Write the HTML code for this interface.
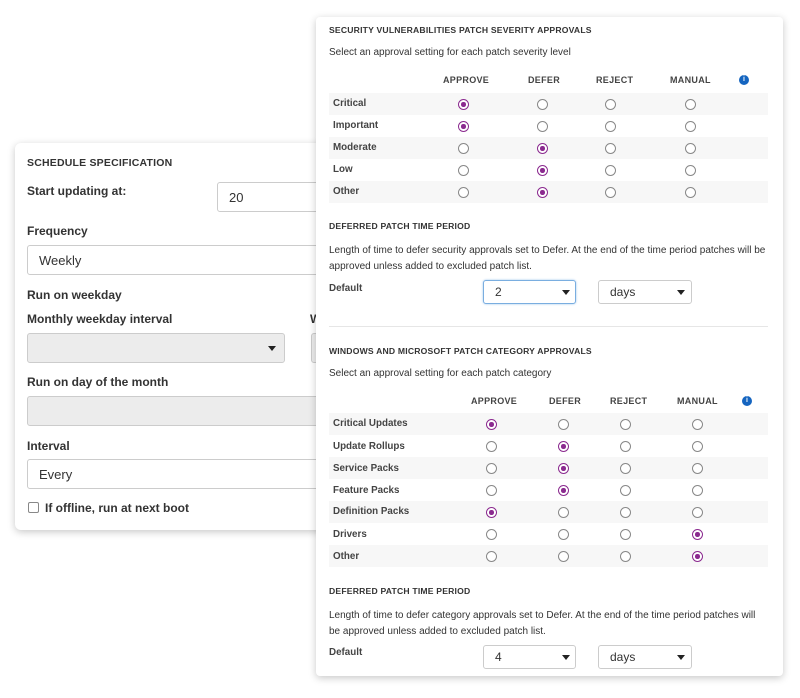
<!DOCTYPE html>
<html><head><meta charset="utf-8"><style>
*{box-sizing:border-box;margin:0;padding:0}
body{width:800px;height:698px;background:#fff;font-family:"Liberation Sans",sans-serif;color:#333;position:relative;overflow:hidden}
.a{position:absolute;white-space:nowrap}
.card{position:absolute;background:#fff;border-radius:6px;box-shadow:0 2px 8px rgba(0,0,0,.22)}
.lbl{font-size:12px;font-weight:bold;color:#333}
.h{font-size:8.6px;font-weight:bold;color:#333;letter-spacing:.2px}
.t{font-size:10px;color:#333}
.inp{position:absolute;border:1px solid #ccc;border-radius:3px;background:#fff;font-size:13px;color:#333;padding-left:11px;display:flex;align-items:center}
.dis{background:#ececec}
.car{position:absolute;width:0;height:0;border-left:4px solid transparent;border-right:4px solid transparent;border-top:5px solid #222}
.stripe{position:absolute;left:329px;width:439px;height:22px;background:#f7f7f7}
.r{position:absolute;width:11px;height:11px;border:1.3px solid #888;border-radius:50%;background:#fff}
.r.on{border-color:#8b2a8f}
.r.on::after{content:"";position:absolute;left:2px;top:2px;width:4.5px;height:4.5px;border-radius:50%;background:#8b2a8f}
.rl{font-size:9.8px;font-weight:bold;color:#444}
.ch{font-size:9px;font-weight:bold;color:#444;letter-spacing:.3px}
.info{position:absolute;width:10px;height:10px;border-radius:50%;background:#1565c0;color:#fff;font-size:7px;font-weight:bold;text-align:center;line-height:10px}
</style></head><body>

<div class="card" style="left:15px;top:143px;width:320px;height:387px"></div>
<div class="a h" style="left:27px;top:157px;font-size:10.5px">SCHEDULE SPECIFICATION</div>
<div class="a lbl" style="left:27px;top:184px">Start updating at:</div>
<div class="inp" style="left:217px;top:182px;width:110px;height:30px">20</div>
<div class="a lbl" style="left:27px;top:224px">Frequency</div>
<div class="inp" style="left:27px;top:245px;width:300px;height:30px">Weekly</div>
<div class="a lbl" style="left:27px;top:288px">Run on weekday</div>
<div class="a lbl" style="left:27px;top:312px">Monthly weekday interval</div>
<div class="a lbl" style="left:310px;top:312px">W</div>
<div class="inp dis" style="left:27px;top:333px;width:258px;height:30px"></div>
<div class="car" style="left:268px;top:346px"></div>
<div class="inp dis" style="left:311px;top:333px;width:20px;height:30px"></div>
<div class="a lbl" style="left:27px;top:375px">Run on day of the month</div>
<div class="inp dis" style="left:27px;top:396px;width:300px;height:30px"></div>
<div class="a lbl" style="left:27px;top:439px">Interval</div>
<div class="inp" style="left:27px;top:459px;width:300px;height:30px">Every</div>
<div class="a" style="left:28px;top:502px;width:11px;height:11px;border:1.3px solid #888;border-radius:2px"></div>
<div class="a lbl" style="left:45px;top:501px">If offline, run at next boot</div>

<div class="card" style="left:316px;top:17px;width:467px;height:659px;border-radius:4px"></div>
<div class="a h" style="left:329px;top:25px">SECURITY VULNERABILITIES PATCH SEVERITY APPROVALS</div>
<div class="a t" style="left:329px;top:47px">Select an approval setting for each patch severity level</div>
<div class="a ch" style="left:443px;top:75px">APPROVE</div>
<div class="a ch" style="left:528px;top:75px">DEFER</div>
<div class="a ch" style="left:596px;top:75px">REJECT</div>
<div class="a ch" style="left:670px;top:75px">MANUAL</div>
<div class="info" style="left:739px;top:75px">i</div>

<div class="stripe" style="top:93px"></div>
<div class="stripe" style="top:137px"></div>
<div class="stripe" style="top:181px"></div>
<div class="a rl" style="left:333px;top:98px">Critical</div>
<div class="a rl" style="left:333px;top:120px">Important</div>
<div class="a rl" style="left:333px;top:142px">Moderate</div>
<div class="a rl" style="left:333px;top:164px">Low</div>
<div class="a rl" style="left:333px;top:186px">Other</div>
<div class="r on" style="left:458px;top:99px"></div><div class="r" style="left:537px;top:99px"></div><div class="r" style="left:605px;top:99px"></div><div class="r" style="left:685px;top:99px"></div>
<div class="r on" style="left:458px;top:121px"></div><div class="r" style="left:537px;top:121px"></div><div class="r" style="left:605px;top:121px"></div><div class="r" style="left:685px;top:121px"></div>
<div class="r" style="left:458px;top:143px"></div><div class="r on" style="left:537px;top:143px"></div><div class="r" style="left:605px;top:143px"></div><div class="r" style="left:685px;top:143px"></div>
<div class="r" style="left:458px;top:165px"></div><div class="r on" style="left:537px;top:165px"></div><div class="r" style="left:605px;top:165px"></div><div class="r" style="left:685px;top:165px"></div>
<div class="r" style="left:458px;top:187px"></div><div class="r on" style="left:537px;top:187px"></div><div class="r" style="left:605px;top:187px"></div><div class="r" style="left:685px;top:187px"></div>

<div class="a h" style="left:329px;top:221px">DEFERRED PATCH TIME PERIOD</div>
<div class="a t" style="left:329px;top:243px;line-height:16px">Length of time to defer security approvals set to Defer. At the end of the time period patches will be<br>approved unless added to excluded patch list.</div>
<div class="a rl" style="left:329px;top:283px">Default</div>
<div class="inp" style="left:483px;top:280px;width:93px;height:24px;border-color:#7aaee0;box-shadow:0 0 2px #9cc4ec;font-size:12px">2</div>
<div class="car" style="left:562px;top:290px"></div>
<div class="inp" style="left:598px;top:280px;width:94px;height:24px;font-size:12px">days</div>
<div class="car" style="left:677px;top:290px"></div>

<div class="a" style="left:329px;top:326px;width:439px;height:1px;background:#e6e6e6"></div>

<div class="a h" style="left:329px;top:346px">WINDOWS AND MICROSOFT PATCH CATEGORY APPROVALS</div>
<div class="a t" style="left:329px;top:368px">Select an approval setting for each patch category</div>
<div class="a ch" style="left:471px;top:396px">APPROVE</div>
<div class="a ch" style="left:549px;top:396px">DEFER</div>
<div class="a ch" style="left:610px;top:396px">REJECT</div>
<div class="a ch" style="left:677px;top:396px">MANUAL</div>
<div class="info" style="left:742px;top:396px">i</div>

<div class="stripe" style="top:413px"></div>
<div class="stripe" style="top:457px"></div>
<div class="stripe" style="top:501px"></div>
<div class="stripe" style="top:545px"></div>
<div class="a rl" style="left:333px;top:418px">Critical Updates</div>
<div class="a rl" style="left:333px;top:441px">Update Rollups</div>
<div class="a rl" style="left:333px;top:463px">Service Packs</div>
<div class="a rl" style="left:333px;top:485px">Feature Packs</div>
<div class="a rl" style="left:333px;top:506px">Definition Packs</div>
<div class="a rl" style="left:333px;top:529px">Drivers</div>
<div class="a rl" style="left:333px;top:551px">Other</div>
<div class="r on" style="left:486px;top:419px"></div><div class="r" style="left:558px;top:419px"></div><div class="r" style="left:620px;top:419px"></div><div class="r" style="left:692px;top:419px"></div>
<div class="r" style="left:486px;top:441px"></div><div class="r on" style="left:558px;top:441px"></div><div class="r" style="left:620px;top:441px"></div><div class="r" style="left:692px;top:441px"></div>
<div class="r" style="left:486px;top:463px"></div><div class="r on" style="left:558px;top:463px"></div><div class="r" style="left:620px;top:463px"></div><div class="r" style="left:692px;top:463px"></div>
<div class="r" style="left:486px;top:485px"></div><div class="r on" style="left:558px;top:485px"></div><div class="r" style="left:620px;top:485px"></div><div class="r" style="left:692px;top:485px"></div>
<div class="r on" style="left:486px;top:507px"></div><div class="r" style="left:558px;top:507px"></div><div class="r" style="left:620px;top:507px"></div><div class="r" style="left:692px;top:507px"></div>
<div class="r" style="left:486px;top:529px"></div><div class="r" style="left:558px;top:529px"></div><div class="r" style="left:620px;top:529px"></div><div class="r on" style="left:692px;top:529px"></div>
<div class="r" style="left:486px;top:551px"></div><div class="r" style="left:558px;top:551px"></div><div class="r" style="left:620px;top:551px"></div><div class="r on" style="left:692px;top:551px"></div>

<div class="a h" style="left:329px;top:586px">DEFERRED PATCH TIME PERIOD</div>
<div class="a t" style="left:329px;top:608px;line-height:16px">Length of time to defer category approvals set to Defer. At the end of the time period patches will<br>be approved unless added to excluded patch list.</div>
<div class="a rl" style="left:329px;top:647px">Default</div>
<div class="inp" style="left:483px;top:645px;width:93px;height:24px;font-size:12px">4</div>
<div class="car" style="left:562px;top:655px"></div>
<div class="inp" style="left:598px;top:645px;width:94px;height:24px;font-size:12px">days</div>
<div class="car" style="left:677px;top:655px"></div>
</body></html>
